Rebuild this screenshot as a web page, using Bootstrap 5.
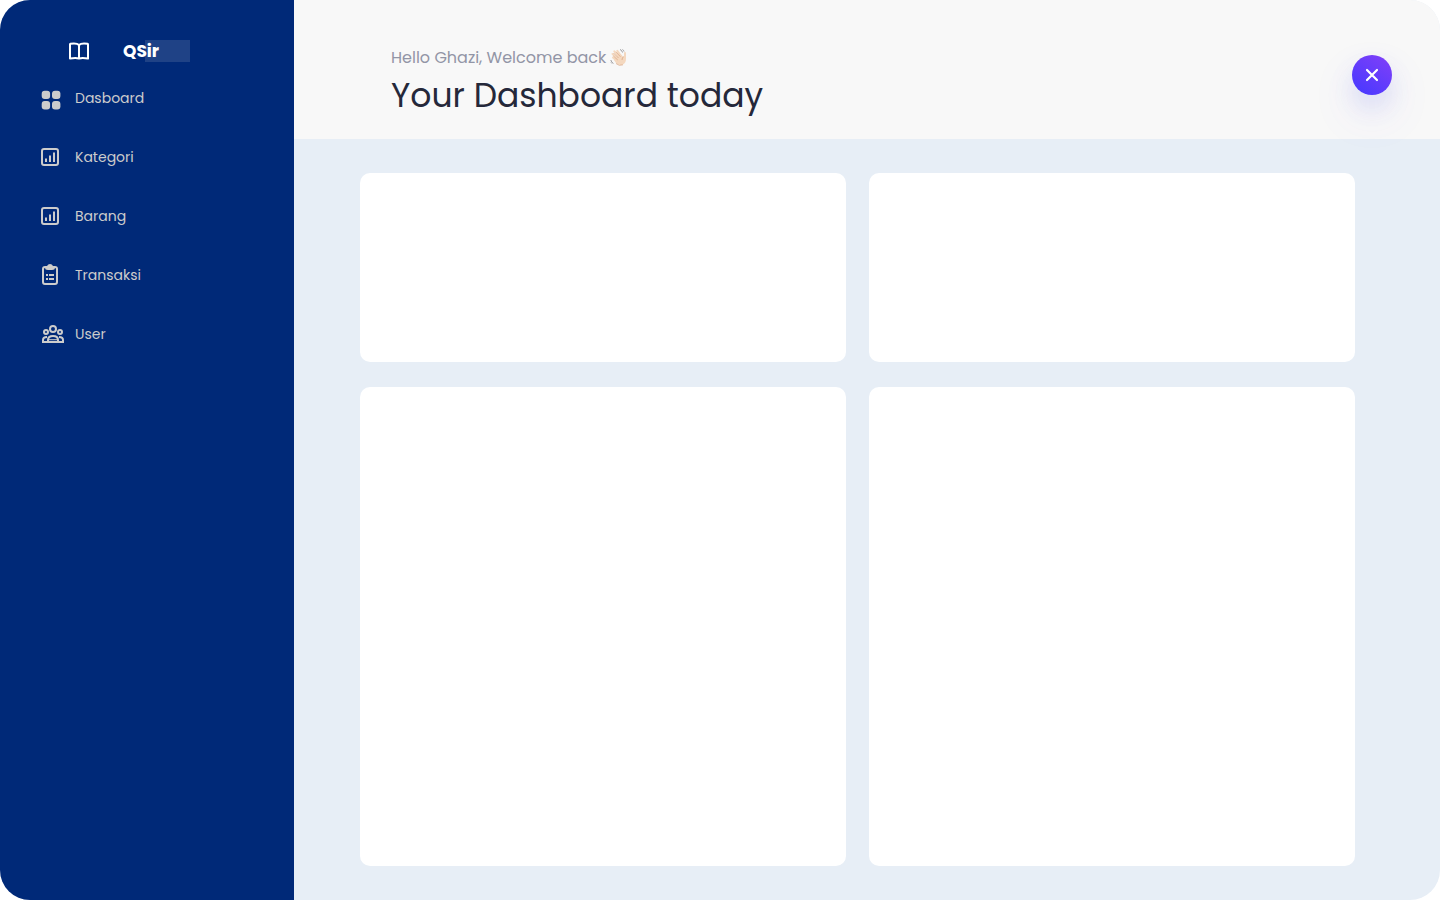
<!DOCTYPE html>
<html lang="id">
<head>
<meta charset="utf-8">
<meta name="viewport" content="width=device-width, initial-scale=1">
<title>QSir Dashboard</title>
<link href="https://cdn.jsdelivr.net/npm/bootstrap@5.3.0/dist/css/bootstrap.min.css" rel="stylesheet">
<style>
  body { background: #fff; font-family: Poppins, Inter, "Open Sans", sans-serif; }
  .app-shell { border-radius: 30px; background: #e7eef6; }
  .app-sidebar { width: 294px; background: #002978; padding-top: 40px; }
  .brand-row { height: 22px; padding-left: 67px; gap: 32px; color: #fff; text-decoration: none; }
  .brand-name { width: 67px; line-height: 22px; font-size: 17px; font-weight: 700; background: linear-gradient(90deg, transparent 22px, #1f4286 22px); }
  .menu-link { height: 59px; padding-left: 40px; gap: 11px; color: #ccc; font-size: 14px; font-weight: 400; text-decoration: none; }
  .menu-link:hover { color: #fff; }
  .menu-list { padding-top: 7px; }
  .app-header { min-height: 139px; padding: 46px 48px 16px 97px; background: #f8f8f8; }
  .greeting { font-size: 16px; line-height: 24px; color: #9295a6; }
  .page-title { font-size: 33px; line-height: 52px; font-weight: 400; color: #25283a; }
  .close-btn { width: 40px; height: 40px; margin-top: 9px; background: linear-gradient(35deg, #4338ff, #8340f8); box-shadow: 0 12px 24px rgba(70, 90, 235, .14), 0 20px 48px rgba(110, 80, 245, .1); }
  .panels { padding: 34px 85px 34px 66px; gap: 25px 23px; display: grid; grid-template-columns: 1fr 1fr; grid-template-rows: 189px 1fr; }
  .panel { background: #fff; border-radius: 10px; }
</style>
</head>
<body>
<div class="app-shell d-flex min-vh-100 overflow-hidden">
  <aside class="app-sidebar flex-shrink-0">
    <a class="brand-row d-flex align-items-center" href="#">
      <svg width="24" height="24" viewBox="0 0 24 24" fill="none" stroke="currentColor" stroke-width="2" stroke-linejoin="round" aria-hidden="true"><path d="M12 6C10.500 4.500 7 4.300 3.500 4.800Q3 4.900 3 5.500V19.500C7 18.800 10 18.800 12 19.500C14 18.800 17 18.800 21 19.500V5.500Q21 4.900 20.500 4.800C17 4.300 13.500 4.500 12 6V19.500"/></svg>
      <span class="brand-name">QSir</span>
    </a>
    <nav class="menu-list d-flex flex-column" aria-label="Menu">
      <a class="menu-link d-flex align-items-center" href="#">
        <svg width="24" height="24" viewBox="0 0 24 24" fill="currentColor" aria-hidden="true"><rect x="1.700" y="3.700" width="8.400" height="8.400" rx="3"/><rect x="12" y="3.700" width="8.400" height="8.400" rx="3"/><rect x="1.700" y="14" width="8.400" height="8.400" rx="3"/><rect x="12" y="14" width="8.400" height="8.400" rx="3"/></svg>
        Dasboard
      </a>
      <a class="menu-link d-flex align-items-center" href="#">
        <svg width="24" height="24" viewBox="0 0 24 24" fill="none" stroke="currentColor" stroke-width="2" aria-hidden="true"><rect x="2" y="3" width="16" height="16" rx="2"/><path d="M6 12.500v3.500M10 9.500v6.500M14 6.500v9.500"/></svg>
        Kategori
      </a>
      <a class="menu-link d-flex align-items-center" href="#">
        <svg width="24" height="24" viewBox="0 0 24 24" fill="none" stroke="currentColor" stroke-width="2" aria-hidden="true"><rect x="2" y="3" width="16" height="16" rx="2"/><path d="M6 12.500v3.500M10 9.500v6.500M14 6.500v9.500"/></svg>
        Barang
      </a>
      <a class="menu-link d-flex align-items-center" href="#">
        <svg width="24" height="24" viewBox="0 0 24 24" fill="none" stroke="currentColor" stroke-width="2" aria-hidden="true"><rect x="3" y="3" width="14" height="17" rx="2"/><path d="M6 11h2M9 11h5M6 15h2M9 15h5"/><path d="M5 2h2q1-2 3-2t3 2h2v1.500q0 2.500-3 2.500H8q-3 0-3-2.500z" fill="currentColor" stroke="none"/></svg>
        Transaksi
      </a>
      <a class="menu-link d-flex align-items-center" href="#">
        <svg width="24" height="24" viewBox="0 0 24 24" fill="none" stroke="currentColor" stroke-width="2" aria-hidden="true"><circle cx="13" cy="6" r="3"/><circle cx="6" cy="9" r="2"/><circle cx="20" cy="9" r="2"/><path d="M8 19v-2q0-4 5-4t5 4v2M3 19v-2q0-3 4-3M23 19v-2q0-3-4-3M2 19h22"/><path d="M9 16.700h8" stroke-width="1"/></svg>
        User
      </a>
    </nav>
  </aside>
  <main class="flex-grow-1 d-flex flex-column">
    <header class="app-header d-flex justify-content-between align-items-start">
      <div>
        <p class="greeting mb-0 d-flex align-items-center gap-1">Hello Ghazi, Welcome back
          <svg width="18" height="20" viewBox="0 1 18 18" role="img" aria-label="Waving hand"><g fill="none" stroke="#f4d8bf" stroke-width="2" stroke-linecap="round"><path d="M8 11L2.500 6M9 9L4.300 3.300M11 8L7.300 2.800M7 13L3 9.500M15 10V5"/></g><path d="M5 10.500L10.500 6L13.500 9L16 9V11Q16 14.500 13 16.500Q9 18 6 15L4 12z" fill="#f4d8bf"/><path d="M3.500 5l5 5M6 3.800l4.500 5M3.300 8l4.500 4M14 8.500q-2 .5-2 3.500M6 15.500q3 3 7 1.300" stroke="#d9a582" stroke-width=".7" fill="none"/><path d="M10 1.500q2 .5 2.500 3M12.500 1.500q1.500 1 1.500 2M.8 12q.5 2 2.500 3.500M1 14.500l1 1" stroke="#9c9c9f" stroke-width="1" fill="none"/></svg>
        </p>
        <h1 class="page-title mb-0">Your Dashboard today</h1>
      </div>
      <button type="button" class="close-btn btn border-0 rounded-circle p-0 d-flex align-items-center justify-content-center flex-shrink-0" aria-label="Close">
        <svg width="24" height="24" viewBox="0 0 24 24" fill="none" stroke="#fff" stroke-width="2.200" stroke-linecap="round" aria-hidden="true"><path d="M7 7l10 10M17 7L7 17"/></svg>
      </button>
    </header>
    <div class="panels flex-grow-1">
      <section class="panel"></section>
      <section class="panel"></section>
      <section class="panel"></section>
      <section class="panel"></section>
    </div>
  </main>
</div>
<script src="https://cdn.jsdelivr.net/npm/bootstrap@5.3.0/dist/js/bootstrap.bundle.min.js"></script>
</body>
</html>
